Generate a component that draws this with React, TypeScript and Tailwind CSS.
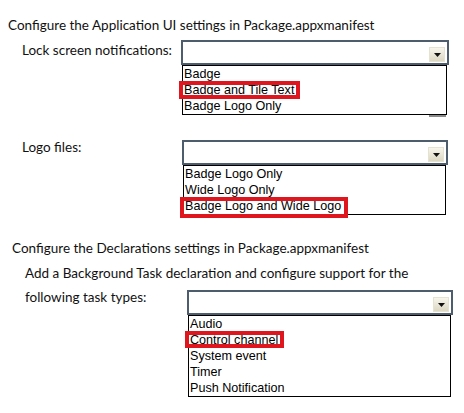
import React from "react";

type Item = { text: string; box?: string };

const LABEL = "font-['Lato','Open_Sans',sans-serif] text-[13.5px] leading-[17px] text-[#111]";

function Combo({ items, width, stub }: { items: Item[]; width: string; stub?: boolean }) {
  return (
    <div className={width}>
      {/* closed combobox */}
      <div className="flex h-[25px] items-end justify-end border-2 border-[#4d5d6d] bg-white pr-[2px] pb-[1px]">
        <div className="flex h-[15px] w-[16px] items-center justify-center border border-[#e6e2d2] bg-gradient-to-b from-[#f7f5ec] to-[#dcd7c3]">
          <svg width="7" height="4" viewBox="0 0 7 4">
            <path d="M0 0h7L3.5 4z" fill="#111" />
          </svg>
        </div>
      </div>

      {/* open list */}
      <div className="ml-[1px] mr-[2px] border border-black bg-white font-['Liberation_Sans',Arial,sans-serif] text-[12.6px] leading-[16px] text-black">
        {items.map(it => (
          <div key={it.text} className="h-[16px] pl-[1px]">
            <span className="relative inline-block">
              {it.text}
              {it.box && <span className={`absolute border-4 border-[#e0161f] ${it.box}`} />}
            </span>
          </div>
        ))}
      </div>
      {stub && (
        <div className="flex justify-end pr-[3px]">
          <div className="h-[2px] w-[17px] bg-[#8a8a8a]" />
        </div>
      )}
    </div>
  );
}

export default function App() {
  return (
    <div className="h-[413px] w-[464px] overflow-hidden bg-white">
      <p className={`${LABEL} pl-[8px] pt-[17px]`}>Configure the Application UI settings in Package.appxmanifest</p>

      {/* Lock screen notifications */}
      <div className="mt-[6px] flex">
        <p className={`${LABEL} w-[181px] shrink-0 pl-[22px] pt-[2px]`}>Lock screen notifications:</p>
        <Combo
          width="w-[268px]"
          stub
          items={[
            { text: "Badge" },
            { text: "Badge and Tile Text", box: "-left-[5px] -right-[6px] -top-[1px] -bottom-[1px]" },
            { text: "Badge Logo Only" },
          ]}
        />
      </div>

      {/* Logo files */}
      <div className="mt-[23px] flex">
        <p className={`${LABEL} -mt-[1px] w-[182px] shrink-0 pl-[22px]`}>Logo files:</p>
        <Combo
          width="w-[266px]"
          items={[
            { text: "Badge Logo Only" },
            { text: "Wide Logo Only" },
            { text: "Badge Logo and Wide Logo", box: "-left-[5px] -right-[7px] -top-[1px] -bottom-[4px]" },
          ]}
        />
      </div>

      <p className={`${LABEL} mt-[25px] pl-[12px]`}>Configure the Declarations settings in Package.appxmanifest</p>
      <p className={`${LABEL} mt-[8px] pl-[25px]`}>Add a Background Task declaration and configure support for the</p>

      {/* Task types */}
      <div className="mt-[8px] flex">
        <p className={`${LABEL} -mt-[1px] w-[187px] shrink-0 pl-[25px]`}>following task types:</p>
        <Combo
          width="w-[266px]"
          items={[
            { text: "Audio" },
            { text: "Control channel", box: "-left-[5px] -right-[6px] -top-[1px] bottom-0" },
            { text: "System event" },
            { text: "Timer" },
            { text: "Push Notification" },
          ]}
        />
      </div>
    </div>
  );
}
